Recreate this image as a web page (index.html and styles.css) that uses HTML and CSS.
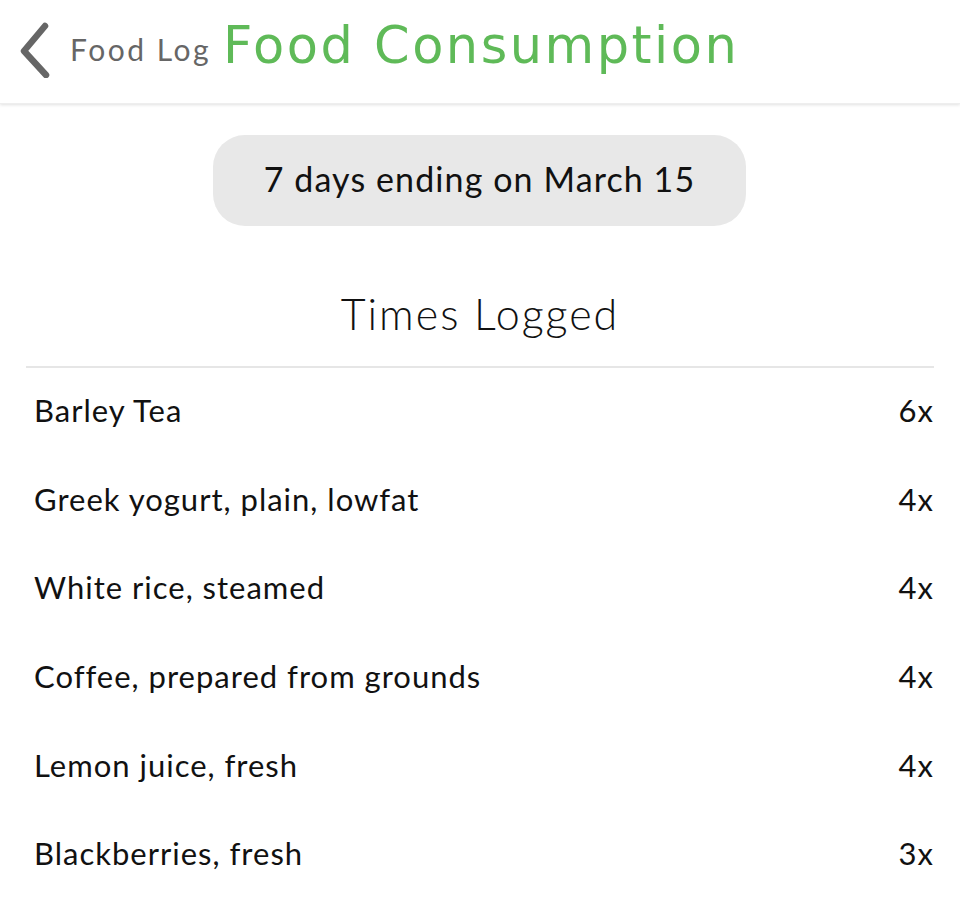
FILE: index.html
```html
<!DOCTYPE html>
<html>
<head>
<meta charset="utf-8">
<link rel="stylesheet" href="styles.css">
</head>
<body>
<header class="topbar">
  <a class="back">
    <svg class="chev" width="44" height="60" viewBox="0 0 44 60"><path d="M31 8 L10 33 L32 57" fill="none" stroke="#666" stroke-width="6.5" stroke-linecap="round" stroke-linejoin="round"/></svg>
    <span class="back-label">Food Log</span>
  </a>
  <h1 class="title">Food Consumption</h1>
</header>
<main class="content">
  <div class="range-wrap"><div class="range">7 days ending on March 15</div></div>
  <h2 class="section">Times Logged</h2>
  <ul class="list">
    <li class="row"><span>Barley Tea</span><span>6x</span></li>
    <li class="row"><span>Greek yogurt, plain, lowfat</span><span>4x</span></li>
    <li class="row"><span>White rice, steamed</span><span>4x</span></li>
    <li class="row"><span>Coffee, prepared from grounds</span><span>4x</span></li>
    <li class="row"><span>Lemon juice, fresh</span><span>4x</span></li>
    <li class="row"><span>Blackberries, fresh</span><span>3x</span></li>
  </ul>
</main>
</body>
</html>
```
FILE: styles.css
```css
* { box-sizing: border-box; }
html, body { margin: 0; padding: 0; background: #fff; }
body { font-family: Lato, "Open Sans", sans-serif; color: #111; width: 960px; height: 899px; overflow: hidden; }
.topbar {
  height: 104px;
  display: flex;
  align-items: center;
  padding-left: 14px;
  box-shadow: 0 1px 3px rgba(0,0,0,0.12);
  border-bottom: 1px solid #eee;
}
.back { display: flex; align-items: center; color: #666; }
.chev { display: block; margin-right: 12px; margin-top: -8px; }
.back-label { font-size: 30px; letter-spacing: 2.5px; margin-top: -6px; }
.title {
  margin: -12px 0 0 12px;
  font-family: "DejaVu Sans", sans-serif;
  font-weight: normal;
  font-size: 51px;
  color: #5fba58;
  letter-spacing: 2.5px;
}
.content { padding: 31px 26px 0; }
.range-wrap { display: flex; justify-content: center; }
.range {
  width: 533px; height: 91px;
  margin-left: -1px;
  border-radius: 32px;
  background: #e8e8e8;
  display: flex; align-items: center; justify-content: center;
  font-size: 34px; color: #111;
  letter-spacing: 1.1px;
  padding-bottom: 4px;
}
.section {
  margin: 62px 0 0;
  font-weight: 300;
  font-size: 43px;
  text-align: center;
  letter-spacing: 2px;
  color: #111;
  height: 80px;
  line-height: 52px;
  border-bottom: 2px solid #e6e6e6;
}
.list { list-style: none; margin: -2px 0 0; padding: 0; }
.row {
  display: flex; justify-content: space-between; align-items: center;
  height: 88.6px;
  font-size: 31px;
  letter-spacing: 1px;
  padding-left: 8px;
}
```
